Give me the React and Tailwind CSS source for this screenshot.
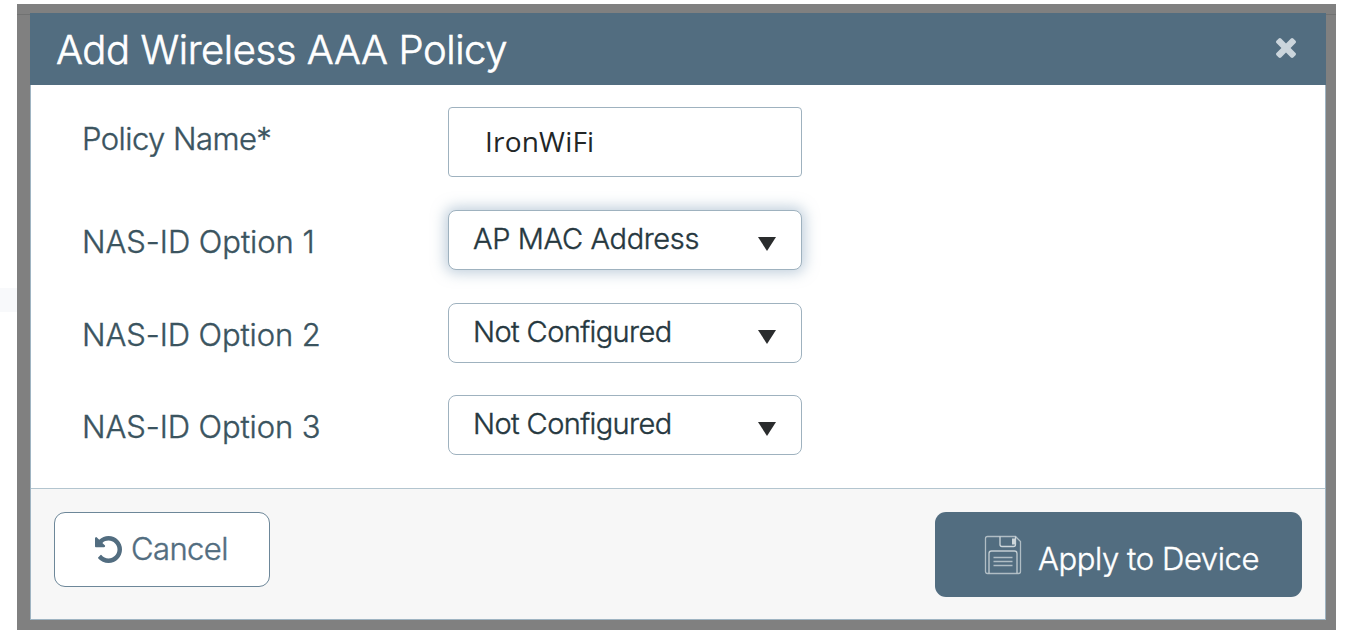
import React from 'react';

function CloseIcon() {
  return (
    <svg className="block size-[20px] fill-[#cbd5dc]" viewBox="302 366 1188 1188" aria-hidden="true">
      <path d="M1490 1322q0 40-28 68l-136 136q-28 28-68 28t-68-28l-294-294-294 294q-28 28-68 28t-68-28l-136-136q-28-28-28-68t28-68l294-294-294-294q-28-28-28-68t28-68l136-136q28-28 68-28t68 28l294 294 294-294q28-28 68-28t68 28l136 136q28 28 28 68t-28 68l-294 294 294 294q28 28 28 68z" />
    </svg>
  );
}

function UndoIcon() {
  return (
    <svg className="block size-[27px] fill-[#526d80]" viewBox="128 128 1536 1536" aria-hidden="true">
      <path d="M1664 896q0 156-61 298t-164 245-245 164-298 61q-172 0-327-72.5t-264-204.5q-7-10-6.5-22.5t8.5-20.5l137-138q10-9 25-9 16 2 23 12 73 95 179 147t225 52q104 0 198.5-40.5t163.5-109.5 109.5-163.5 40.5-198.5-40.5-198.5-109.5-163.5-163.5-109.5-198.5-40.5q-98 0-188 35.5t-160 101.5l137 138q31 30 14 69-17 40-59 40h-448q-26 0-45-19t-19-45v-448q0-42 40-59 39-17 69 14l130 129q107-101 244.5-156.5t284.5-55.5q156 0 298 61t245 164 164 245 61 298z" />
    </svg>
  );
}

function SaveIcon() {
  return (
    <svg className="block h-[40px] w-[38px]" viewBox="0 0 38 40" fill="none" stroke="#b0bdc4" strokeWidth="1.3" aria-hidden="true">
      <path d="M3.5 1.5H31.5L36.5 6.5V36.5Q36.5 38.5 34.5 38.5H3.5Q1.5 38.5 1.5 36.5V3.5Q1.5 1.5 3.5 1.5Z" />
      <path d="M16 1.5V9.5Q16 11.5 18 11.5H29.5Q31.5 11.5 31.5 9.5V1.5" stroke="#cdd6da" />
      <path d="M28 3.5H31V9.5H28Z" fill="#cdd6da" stroke="none" />
      <path d="M5 38.5V18.5Q5 16 7.5 16H30.5Q33 16 33 18.5V38.5" stroke="#c3cdd2" />
      <path d="M9.5 22.5H28.5M9.5 26.5H28.5M9.5 30.5H28.5" strokeWidth="1.4" />
    </svg>
  );
}

function Select({ value, tracking, focused }) {
  return (
    <button
      type="button"
      className={
        'flex h-[60px] w-[354px] items-start justify-between rounded-[8px] border border-[#9fb2bf] bg-white pr-[25px] pl-[24px] ' +
        (focused ? 'shadow-[0_0_14px_3px_rgba(130,160,185,0.5)]' : '')
      }
    >
      <span className={'mt-[10px] text-[29px] leading-[36px] font-light text-[#26383f] ' + tracking}>{value}</span>
      <svg className="mt-[26px] block h-[14px] w-[18px] fill-[#2a2c2d]" viewBox="0 0 18 14" aria-hidden="true">
        <path d="M0 0H18L9 14Z" />
      </svg>
    </button>
  );
}

function Row({ label, tracking, className, children }) {
  return (
    <div className={'flex items-start ' + className}>
      <span className={'mt-[13px] w-[366px] shrink-0 text-[31px] leading-[38px] font-light text-[#3b545f] ' + tracking}>{label}</span>
      {children}
    </div>
  );
}

export default function App() {
  return (
    <div className="flex h-[639px] w-[1352px] bg-white font-['Inter','Liberation_Sans',sans-serif] [-webkit-text-stroke:0.4px_currentColor]">
      <div className="mt-[288px] h-[24px] w-[17px] shrink-0 bg-[#f8f9fb]" />
      <div className="mt-[4px] flex h-[626px] w-[1319px] flex-col bg-[#808080]">
        <div className="h-[11px] shrink-0 border-b border-[#717272]" />
        <div className="-mt-[2px] ml-[13px] flex h-[607px] w-[1296px] flex-col">
          <header className="flex h-[72px] shrink-0 items-center justify-between bg-[#526d80] pr-[30px] pl-[26px]">
            <h1 className="mt-px text-[40px] leading-[48px] font-light tracking-[-0.41px] whitespace-nowrap text-white [-webkit-text-stroke:0.6px_currentColor]">
              Add Wireless AAA Policy
            </h1>
            <button type="button" aria-label="Close" className="-mt-[2px]">
              <CloseIcon />
            </button>
          </header>
          <div className="flex min-h-0 flex-1 flex-col border border-t-0 border-[#9fb4c2] bg-white">
            <main className="flex h-[403px] shrink-0 flex-col pt-[22px] pl-[51px]">
              <Row label="Policy Name*" tracking="tracking-[-0.55px]" className="h-[103px]">
                <div className="h-[70px] w-[354px] rounded-[4px] border border-[#9fb2bf] bg-white pt-[14px] pl-[36px] font-['Open_Sans',sans-serif] text-[28px] leading-[38px] tracking-[0.2px] text-[#222627] [-webkit-text-stroke:0]">
                  IronWiFi
                </div>
              </Row>
              <Row label="NAS-ID Option 1" tracking="tracking-[-0.05px]" className="h-[93px]">
                <Select value="AP MAC Address" tracking="tracking-[-0.35px]" focused />
              </Row>
              <Row label="NAS-ID Option 2" tracking="tracking-[-0.1px]" className="h-[92px]">
                <Select value="Not Configured" tracking="tracking-[-0.6px]" />
              </Row>
              <Row label="NAS-ID Option 3" tracking="tracking-[-0.1px]" className="h-[60px]">
                <Select value="Not Configured" tracking="tracking-[-0.6px]" />
              </Row>
            </main>
            <footer className="flex flex-1 items-start justify-between border-t border-[#b3c5cf] bg-[#f7f7f7] pt-[23px] pr-[23px] pl-[23px]">
              <button type="button" className="flex h-[75px] w-[216px] items-center rounded-[11px] border border-[#6d8799] bg-white pl-[40px]">
                <UndoIcon />
                <span className="-mt-px ml-[9px] text-[31px] leading-[38px] font-light tracking-[-0.6px] text-[#526d80]">Cancel</span>
              </button>
              <button type="button" className="flex h-[85px] w-[367px] items-center rounded-[11px] bg-[#526d80] pl-[49px]">
                <SaveIcon />
                <span className="mt-[8px] ml-[16px] text-[31px] leading-[38px] font-light tracking-[-0.4px] whitespace-nowrap text-white">
                  Apply to Device
                </span>
              </button>
            </footer>
          </div>
        </div>
      </div>
    </div>
  );
}
